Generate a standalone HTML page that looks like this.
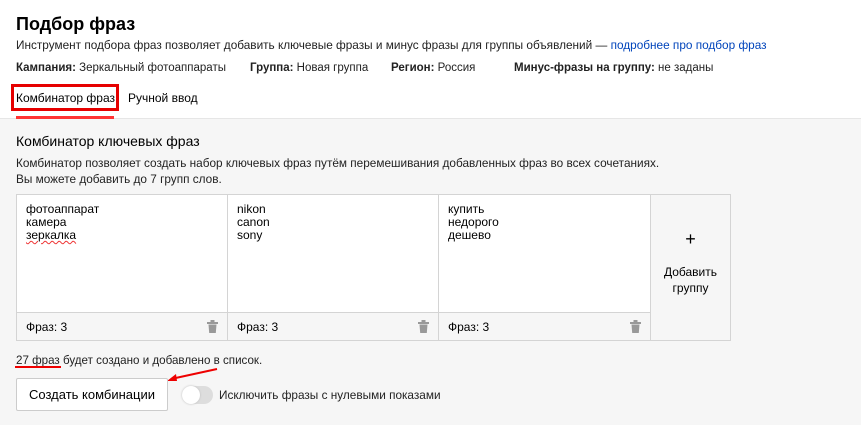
<!DOCTYPE html>
<html><head><meta charset="utf-8"><style>
*{box-sizing:border-box;margin:0;padding:0}
body{width:861px;height:425px;overflow:hidden;background:#f6f6f6;font-family:"Liberation Sans",Arial,sans-serif;color:#000;position:relative}
.top{position:absolute;left:0;top:0;width:861px;height:119px;background:#fff;border-bottom:1px solid #e6e6e6}
.a{position:absolute;white-space:nowrap}
.col{position:absolute;top:194px;height:147px;background:#fff;border:1px solid #d4d4d4}
.col .t{position:absolute;left:9px;top:8px;font-size:12px;line-height:13px}
.col .f{position:absolute;left:0;right:0;bottom:0;height:28px;background:#f6f6f6;border-top:1px solid #d4d4d4;font-size:12px;padding:7px 0 0 9px}
.trash{position:absolute;right:9px;top:7px;width:11px;height:13px}
</style></head><body>
<div class="top"></div>
<div class="a" style="left:16px;top:14px;font-size:18px;font-weight:bold">Подбор фраз</div>
<div class="a" style="left:16px;top:38px;font-size:11.8px;color:#222">Инструмент подбора фраз позволяет добавить ключевые фразы и минус фразы для группы объявлений — <span style="color:#04b">подробнее про подбор фраз</span></div>
<div class="a" style="left:16px;top:62px;font-size:11.5px;color:#222"><b>Кампания:</b> Зеркальный фотоаппараты</div>
<div class="a" style="left:250px;top:62px;font-size:11.5px;color:#222"><b>Группа:</b> Новая группа</div>
<div class="a" style="left:391px;top:62px;font-size:11.5px;color:#222"><b>Регион:</b> Россия</div>
<div class="a" style="left:514px;top:62px;font-size:11.5px;color:#222"><b>Минус-фразы на группу:</b> не заданы</div>
<div class="a" style="left:11px;top:84px;width:108px;height:27px;border:3px solid #e60000"></div>
<div class="a" style="left:16px;top:91px;font-size:12px">Комбинатор фраз</div>
<div class="a" style="left:128px;top:91px;font-size:12px">Ручной ввод</div>
<div class="a" style="left:16px;top:116px;width:98px;height:3px;background:#f33"></div>

<div class="a" style="left:16px;top:133px;font-size:14px">Комбинатор ключевых фраз</div>
<div class="a" style="left:16px;top:155px;font-size:11.8px;line-height:16px;color:#222">Комбинатор позволяет создать набор ключевых фраз путём перемешивания добавленных фраз во всех сочетаниях.<br>Вы можете добавить до 7 групп слов.</div>

<div class="col" style="left:16px;width:212px"><div class="t">фотоаппарат<br>камера<br><span style="text-decoration:underline wavy #e33;text-decoration-thickness:1px">зеркалка</span></div><div class="f">Фраз: 3<svg class="trash" viewBox="0 0 11 13"><rect x="0" y="2" width="11" height="2" fill="#999"/><rect x="3.5" y="0" width="4" height="2" fill="#999"/><path d="M1.5 4.5h8l-.7 8.5h-6.6z" fill="#999"/></svg></div></div>
<div class="col" style="left:227px;width:212px"><div class="t">nikon<br>canon<br>sony</div><div class="f">Фраз: 3<svg class="trash" viewBox="0 0 11 13"><rect x="0" y="2" width="11" height="2" fill="#999"/><rect x="3.5" y="0" width="4" height="2" fill="#999"/><path d="M1.5 4.5h8l-.7 8.5h-6.6z" fill="#999"/></svg></div></div>
<div class="col" style="left:438px;width:213px"><div class="t">купить<br>недорого<br>дешево</div><div class="f">Фраз: 3<svg class="trash" viewBox="0 0 11 13"><rect x="0" y="2" width="11" height="2" fill="#999"/><rect x="3.5" y="0" width="4" height="2" fill="#999"/><path d="M1.5 4.5h8l-.7 8.5h-6.6z" fill="#999"/></svg></div></div>
<div class="col" style="left:650px;width:81px;background:#f6f6f6;text-align:center;font-size:12px"><div style="margin-top:34px;font-size:18px;line-height:20px">+</div><div style="margin-top:15px;line-height:16px">Добавить<br>группу</div></div>

<div class="a" style="left:16px;top:354px;font-size:11.6px;color:#222">27 фраз будет создано и добавлено в список.</div>
<div class="a" style="left:15px;top:366px;width:46px;height:2px;background:#e00"></div>
<svg class="a" style="left:165px;top:367px" width="60" height="18"><path d="M52 2 L6 12" stroke="#e00" stroke-width="2"/><path d="M2 14 L11 7 L12 14z" fill="#e00"/></svg>
<div class="a" style="left:16px;top:378px;width:152px;height:33px;background:#fff;border:1px solid #ccc;border-radius:2px;font-size:13px;text-align:center;line-height:31px">Создать комбинации</div>
<div class="a" style="left:182px;top:386px;width:31px;height:18px;border-radius:9px;background:#ddd"></div>
<div class="a" style="left:182px;top:386px;width:18px;height:18px;border-radius:9px;background:#fff;box-shadow:0 0 2px #bbb"></div>
<div class="a" style="left:219px;top:388px;font-size:11.8px;color:#222">Исключить фразы с нулевыми показами</div>
</body></html>
